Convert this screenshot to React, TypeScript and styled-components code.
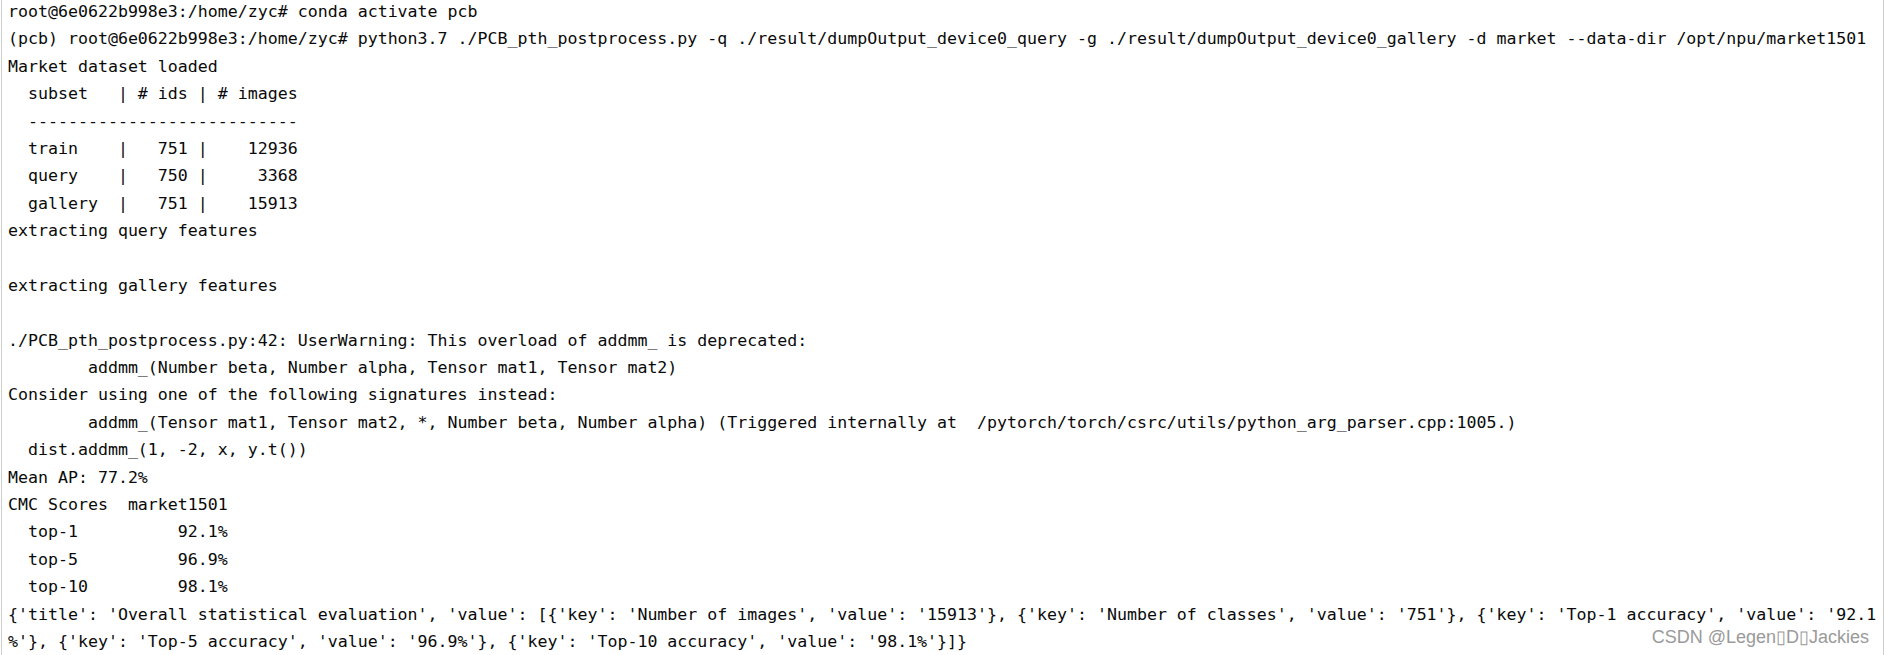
import React from "react";
import styled, { createGlobalStyle } from "styled-components";

const Global = createGlobalStyle`
  html, body {
    margin: 0;
    padding: 0;
    background: #ffffff;
  }
`;

const Frame = styled.div`
  position: relative;
  height: 655px;
  box-sizing: border-box;
  border-left: 1px solid #cfcfcf;
  border-right: 1px solid #cfcfcf;
  margin-left: 1px;
  width: 1883px;
  background: #ffffff;
  overflow: hidden;
`;

const Output = styled.pre`
  margin: -2px 0 0 0;
  padding: 0 0 0 6px;
  font-family: "DejaVu Sans Mono", "Liberation Mono", monospace;
  font-size: 16.6px;
  line-height: 27.4px;
  color: #0a0a0a;
  white-space: pre;
`;

const Line = styled.div`
  height: 27.4px;
`;

const Watermark = styled.div`
  position: absolute;
  right: 14px;
  bottom: 7px;
  font-family: "Liberation Sans", Arial, sans-serif;
  font-size: 18px;
  color: #9a9a9a;
  text-shadow: 0 0 1px #ffffff, 0 0 1px #ffffff;
  white-space: pre;
`;

const lines: string[] = [
  "root@6e0622b998e3:/home/zyc# conda activate pcb",
  "(pcb) root@6e0622b998e3:/home/zyc# python3.7 ./PCB_pth_postprocess.py -q ./result/dumpOutput_device0_query -g ./result/dumpOutput_device0_gallery -d market --data-dir /opt/npu/market1501",
  "Market dataset loaded",
  "  subset   | # ids | # images",
  "  ---------------------------",
  "  train    |   751 |    12936",
  "  query    |   750 |     3368",
  "  gallery  |   751 |    15913",
  "extracting query features",
  "",
  "extracting gallery features",
  "",
  "./PCB_pth_postprocess.py:42: UserWarning: This overload of addmm_ is deprecated:",
  "        addmm_(Number beta, Number alpha, Tensor mat1, Tensor mat2)",
  "Consider using one of the following signatures instead:",
  "        addmm_(Tensor mat1, Tensor mat2, *, Number beta, Number alpha) (Triggered internally at  /pytorch/torch/csrc/utils/python_arg_parser.cpp:1005.)",
  "  dist.addmm_(1, -2, x, y.t())",
  "Mean AP: 77.2%",
  "CMC Scores  market1501",
  "  top-1          92.1%",
  "  top-5          96.9%",
  "  top-10         98.1%",
  "{'title': 'Overall statistical evaluation', 'value': [{'key': 'Number of images', 'value': '15913'}, {'key': 'Number of classes', 'value': '751'}, {'key': 'Top-1 accuracy', 'value': '92.1",
  "%'}, {'key': 'Top-5 accuracy', 'value': '96.9%'}, {'key': 'Top-10 accuracy', 'value': '98.1%'}]}",
];

export default function App() {
  return (
    <>
      <Global />
      <Frame>
        <Output>
          {lines.map((l, i) => (
            <Line key={i}>{l}</Line>
          ))}
        </Output>
        <Watermark>CSDN @Legen▯D▯Jackies</Watermark>
      </Frame>
    </>
  );
}
